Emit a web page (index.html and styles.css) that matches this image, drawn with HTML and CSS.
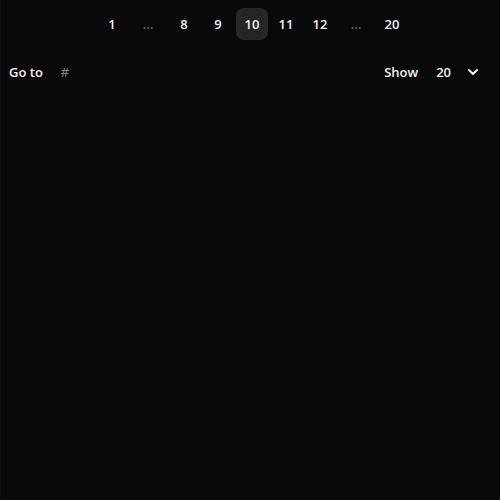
FILE: index.html
```html
<html>
  <head>
    <title>pagination</title>
    <link rel="stylesheet" href="styles.css">
  </head>
  <body>
    <main class="pager">
      <nav class="pages">
        <button class="page">1</button>
        <span class="page dots">…</span>
        <button class="page">8</button>
        <button class="page">9</button>
        <button class="page active">10</button>
        <button class="page">11</button>
        <button class="page">12</button>
        <span class="page dots">…</span>
        <button class="page">20</button>
      </nav>
      <div class="controls">
        <label class="goto">
          Go to
          <input type="text" placeholder="#" />
        </label>
        <label class="show">
          Show
          <span class="select">
            <span class="value">20</span>
            <svg width="12" height="12" viewBox="0 0 12 12">
              <path d="M2 4 L6 8 L10 4" fill="none" stroke="#f2f2f2" stroke-width="2" stroke-linecap="round" stroke-linejoin="round" />
            </svg>
          </span>
        </label>
      </div>
    </main>
  </body>
</html>
```

FILE: styles.css
```css
html,
body {
  margin: 0;
  width: 100%;
  height: 100%;
  background: #090909;
}

body {
  font: 600 13px "Open Sans", sans-serif;
  color: #f2f2f2;
  border-left: 1px solid #111;
  box-sizing: border-box;
}

.pager {
  padding: 8px 8px 0 8px;
}

.pages {
  display: flex;
  justify-content: center;
  gap: 2px;
  padding-left: 3px;
}

.page {
  width: 32px;
  height: 32px;
  display: flex;
  align-items: center;
  justify-content: center;
  border: 0;
  border-radius: 8px;
  background: none;
  color: #f2f2f2;
  font: inherit;
  padding: 0;
}
.page.active {
  background: #262626;
}
.page.dots {
  color: #6b6b6b;
  width: 36px;
}

.controls {
  display: flex;
  justify-content: space-between;
  align-items: center;
  margin-top: 16px;
  height: 32px;
}

.goto,
.show {
  display: flex;
  align-items: center;
}

.goto input {
  width: 40px;
  margin-left: 18px;
  border: 0;
  background: none;
  font: inherit;
  font-weight: 400;
  color: #f2f2f2;
  padding: 0;
}
.goto input::placeholder {
  color: #8a8a8a;
}

.select {
  display: flex;
  align-items: center;
  margin-left: 18px;
  margin-right: 13px;
}
.select .value {
  margin-right: 16px;
}
```
